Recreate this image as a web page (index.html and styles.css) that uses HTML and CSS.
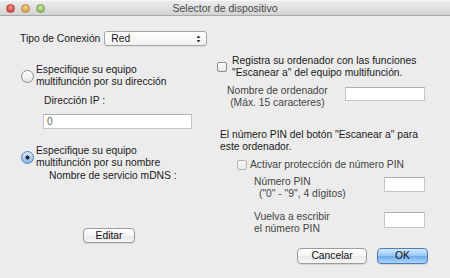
FILE: index.html
```html
<!DOCTYPE html>
<html lang="es">
<head>
<meta charset="utf-8">
<title>Selector de dispositivo</title>
<link rel="stylesheet" href="styles.css">
</head>
<body>
<div class="window">
  <div class="titlebar">
    <div class="lights">
      <span class="light red"></span>
      <span class="light yellow"></span>
      <span class="light green"></span>
    </div>
    <div class="title">Selector de dispositivo</div>
    <div></div>
  </div>
  <div class="content">
    <div class="conn-row">
      <span>Tipo de Conexión</span>
      <div class="select">
        <span>Red</span>
        <svg class="updown" width="5" height="8" viewBox="0 0 5 8"><path d="M2.5 0.5 L4.5 3 L0.5 3 Z M2.5 7.5 L4.5 5 L0.5 5 Z" fill="#333"/></svg>
      </div>
    </div>
    <div class="columns">
      <div class="col-left">
        <div class="radio-row">
          <span class="radio"></span>
          <span>Especifique su equipo<br>multifunción por su dirección</span>
        </div>
        <div class="ip-label">Dirección IP :</div>
        <input class="field ip" type="text" value="0">
        <div class="radio-row second">
          <span class="radio on"></span>
          <span>Especifique su equipo<br>multifunción por su nombre</span>
        </div>
        <div class="mdns-label">Nombre de servicio mDNS :</div>
        <button class="btn editar">Editar</button>
      </div>
      <div class="col-right">
        <div class="check-row">
          <span class="checkbox"></span>
          <span>Registra su ordenador con las funciones<br>"Escanear a" del equipo multifunción.</span>
        </div>
        <div class="pair computer">
          <div class="pair-label centered dim">Nombre de ordenador<br>(Máx. 15 caracteres)</div>
          <input class="field name" type="text">
        </div>
        <div class="info">El número PIN del botón "Escanear a" para<br>este ordenador.</div>
        <div class="check-row pin">
          <span class="checkbox off"></span>
          <span class="dim">Activar protección de número PIN</span>
        </div>
        <div class="pair pin-num">
          <div class="pair-label dim">Número PIN<br><span class="indent">("0" - "9", 4 dígitos)</span></div>
          <input class="field pin-field" type="text">
        </div>
        <div class="pair pin-re">
          <div class="pair-label dim">Vuelva a escribir<br>el número PIN</div>
          <input class="field pin-field tall" type="text">
        </div>
      </div>
    </div>
    <div class="footer">
      <button class="btn cancel">Cancelar</button>
      <button class="btn ok">OK</button>
    </div>
  </div>
</div>
</body>
</html>
```

FILE: styles.css
```css
* { box-sizing: border-box; }

html, body {
  margin: 0;
  padding: 0;
}

body {
  width: 450px;
  height: 278px;
  overflow: hidden;
  font-family: "Liberation Sans", Arial, sans-serif;
  font-size: 10.3px;
  line-height: 12px;
  color: #1a1a1a;
  background: #ececec;
}

.window {
  width: 450px;
  height: 278px;
  display: flex;
  flex-direction: column;
  background: #ececec;
}

/* Title bar */
.titlebar {
  height: 16px;
  flex: none;
  display: grid;
  grid-template-columns: 1fr auto 1fr;
  align-items: center;
  background: linear-gradient(#ececec, #d3d3d3);
  border-bottom: 1px solid #a8a8a8;
  border-top: 1px solid #f7f7f7;
}

.lights {
  display: flex;
  gap: 6px;
  padding-left: 6px;
}

.light {
  width: 9px;
  height: 9px;
  border-radius: 50%;
  display: block;
}

.light.red {
  background: radial-gradient(circle at 50% 35%, #f29a92, #d6473f 70%);
  border: 1px solid #b3423b;
}

.light.yellow {
  background: radial-gradient(circle at 50% 35%, #f6d796, #dda148 70%);
  border: 1px solid #b9883f;
}

.light.green {
  background: radial-gradient(circle at 50% 35%, #cfe9ad, #8fc15b 70%);
  border: 1px solid #74a24a;
}

.title {
  color: #4a4a4a;
  text-align: center;
  font-size: 10.5px;
}

/* Content */
.content {
  flex: 1;
  padding: 15px 20px 0 20px;
}

.conn-row {
  display: flex;
  align-items: center;
  height: 15px;
}

.select {
  margin-left: 4px;
  width: 103px;
  height: 15px;
  display: flex;
  align-items: center;
  justify-content: space-between;
  padding: 0 5px 0 6px;
  border: 1px solid #a4a4a4;
  border-radius: 3px;
  background: linear-gradient(#ffffff, #f1f1f1);
  box-shadow: 0 1px 0 rgba(0, 0, 0, 0.06);
}

.updown {
  display: block;
}

.columns {
  display: flex;
}

/* Left column */
.col-left {
  width: 197px;
  padding-top: 18px;
  display: flex;
  flex-direction: column;
  align-items: flex-start;
}

.radio-row {
  display: flex;
  align-items: center;
}

.radio {
  flex: none;
  width: 13px;
  height: 13px;
  margin: 1px 2px 0 1px;
  border-radius: 50%;
  border: 1px solid #8d8d8d;
  background: linear-gradient(#ffffff, #e4e4e4);
}

.radio.on {
  border-color: #5b7fa9;
  background:
    radial-gradient(circle, #1b1b1b 0 1.7px, transparent 2.3px),
    linear-gradient(#d9e9fb, #86b7ea);
}

.ip-label {
  margin-top: 7px;
  margin-left: 24px;
}

.field {
  display: block;
  margin: 0;
  padding: 0 3px;
  font: inherit;
  color: #666;
  background: #ffffff;
  border: 1px solid #c5c5c5;
  border-top-color: #b0b0b0;
  outline: none;
}

.field.ip {
  margin-top: 7px;
  margin-left: 23px;
  width: 149px;
  height: 15px;
}

.radio-row.second {
  margin-top: 16px;
}

.mdns-label {
  margin-top: 1px;
  margin-left: 29px;
}

.btn {
  margin: 0;
  padding: 0;
  font: inherit;
  color: #111;
  display: flex;
  align-items: center;
  justify-content: center;
  height: 16px;
  border: 1px solid #9c9c9c;
  border-radius: 4px;
  background: linear-gradient(#ffffff, #f4f4f4 50%, #e9e9e9 51%, #f6f6f6);
  box-shadow: 0 1px 1px rgba(0, 0, 0, 0.1);
}

.btn.editar {
  margin-top: 46px;
  margin-left: 63px;
  width: 52px;
  height: 15px;
}

/* Right column */
.col-right {
  width: 208px;
  padding-top: 9px;
}

.check-row {
  display: flex;
  align-items: center;
}

.checkbox {
  flex: none;
  width: 10px;
  height: 10px;
  margin-right: 5px;
  border: 1px solid #8e8e8e;
  border-radius: 2px;
  background: linear-gradient(#ffffff, #e6e6e6);
}

.checkbox.off {
  border-color: #b4b4b4;
  background: linear-gradient(#f8f8f8, #ebebeb);
  margin-right: 3px;
}

.dim {
  color: #444;
}

.pair {
  display: flex;
  align-items: flex-start;
}

.pair .field {
  margin-left: auto;
}

.pair.computer {
  margin-top: 6px;
}

.pair.computer .pair-label {
  margin-left: 10px;
}

.centered {
  text-align: center;
}

.field.name {
  margin-top: 2px;
  width: 80px;
  height: 14px;
}

.info {
  margin-top: 20px;
  margin-left: 3px;
}

.check-row.pin {
  margin-top: 6px;
  margin-left: 20px;
}

.pair.pin-num {
  margin-top: 5px;
}

.pair.pin-re {
  margin-top: 11px;
}

.pair.pin-num .pair-label,
.pair.pin-re .pair-label {
  margin-left: 37px;
}

.indent {
  padding-left: 5px;
}

.field.pin-field {
  margin-top: 1px;
  width: 41px;
  height: 15px;
}

.field.pin-field.tall {
  height: 16px;
}

/* Footer */
.footer {
  display: flex;
  justify-content: flex-end;
  gap: 10px;
  margin-top: 5px;
  padding-right: 2px;
}

.btn.cancel {
  width: 70px;
}

.btn.ok {
  width: 51px;
  border-color: #4e7db7;
  background: linear-gradient(#d3e8fc, #93c6f4 50%, #6eabec 51%, #a9d6fb);
}
```
